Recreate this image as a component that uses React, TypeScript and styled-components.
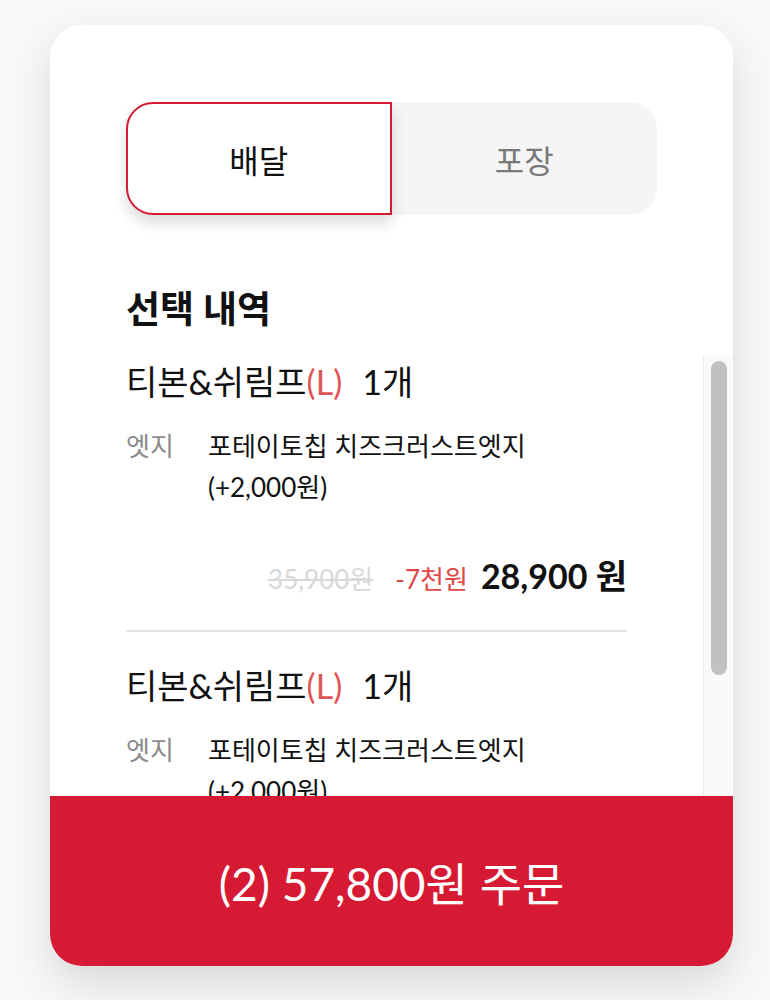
import React from 'react';
import styled, { createGlobalStyle } from 'styled-components';

const GlobalStyle = createGlobalStyle`
    body {
        margin: 0;
        background: #f8f8f8;
        font-family: Lato, "Noto Sans CJK KR", sans-serif;
        color: #111;
    }
`;

const Page = styled.div`
    display: flex;
    justify-content: flex-start;
    padding: 25px 0 0 50px;
    height: 1000px;
    box-sizing: border-box;
`;

const Card = styled.div`
    width: 683px;
    height: 941px;
    background: #fff;
    border-radius: 32px;
    overflow: hidden;
    box-shadow: 0 18px 40px rgba(0, 0, 0, 0.12);
    display: flex;
    flex-direction: column;
`;

const Top = styled.div`
    padding: 77px 76px 0;
`;

const Tabs = styled.div`
    display: grid;
    grid-template-columns: 1fr 1fr;
    height: 113px;
    background: #f5f5f5;
    border-radius: 27px;
`;

const Tab = styled.button<{ active?: boolean }>`
    border: ${({ active }) => (active ? '2px solid #d71a33' : 'none')};
    border-radius: ${({ active }) => (active ? '27px 0 0 27px' : '0 27px 27px 0')};
    background: ${({ active }) => (active ? '#fff' : 'transparent')};
    box-shadow: ${({ active }) => (active ? '0 8px 14px rgba(0, 0, 0, 0.14)' : 'none')};
    color: ${({ active }) => (active ? '#111' : '#7a7a7a')};
    font-family: inherit;
    font-size: 32px;
    padding: 0;
    cursor: pointer;
`;

const Heading = styled.h2`
    margin: 72px 0 24px;
    font-size: 37px;
    line-height: 44px;
    font-weight: 700;
`;

const List = styled.div`
    display: flex;
    height: 441px;
    flex-shrink: 0;
`;

const ListContent = styled.div`
    flex: 1;
    overflow: hidden;
`;

const ScrollTrack = styled.div`
    width: 30px;
    box-sizing: border-box;
    padding: 6px 6px 0 7px;
    background: #fafafa;
    border-left: 1px solid #ebebeb;
`;

const ScrollThumb = styled.div`
    width: 16px;
    height: 314px;
    border-radius: 8px;
    background: #c1c1c1;
`;

const Item = styled.div`
    margin: 0 76px;
    padding: 34px 0 31px;
    border-bottom: 2px solid #e4e4e4;

    &:first-child {
        padding-top: 7px;
    }
`;

const Title = styled.div`
    font-size: 34px;
    line-height: 40px;
`;

const Size = styled.span`
    color: #e05555;
    margin-right: 20px;
`;

const Option = styled.div`
    display: flex;
    margin-top: 24px;
    font-size: 26px;
    line-height: 41px;
`;

const OptionLabel = styled.div`
    width: 82px;
    flex-shrink: 0;
    color: #8a8a8a;
`;

const OptionValue = styled.div`
    width: 360px;
`;

const PriceRow = styled.div`
    display: flex;
    justify-content: flex-end;
    align-items: baseline;
    gap: 13px;
    margin-top: 48px;
    line-height: 40px;
`;

const OldPrice = styled.span`
    font-size: 26px;
    color: #d8d8d8;
    text-decoration: line-through;
    margin-right: 9px;
`;

const Discount = styled.span`
    font-size: 26px;
    color: #e04848;
`;

const Total = styled.span`
    font-size: 34px;
    font-weight: 700;
`;

const OrderButton = styled.button`
    height: 170px;
    flex-shrink: 0;
    border: none;
    background: #d71a33;
    color: #fff;
    font-family: inherit;
    font-size: 46px;
    cursor: pointer;
`;

const items = [1, 2];

const App: React.FC = () => {
    return (
        <Page>
            <GlobalStyle />
            <Card>
                <Top>
                    <Tabs>
                        <Tab active>배달</Tab>
                        <Tab>포장</Tab>
                    </Tabs>
                    <Heading>선택 내역</Heading>
                </Top>
                <List>
                    <ListContent>
                        {items.map((id) => (
                            <Item key={id}>
                                <Title>
                                    티본&쉬림프<Size>(L)</Size>1개
                                </Title>
                                <Option>
                                    <OptionLabel>엣지</OptionLabel>
                                    <OptionValue>포테이토칩 치즈크러스트엣지 (+2,000원)</OptionValue>
                                </Option>
                                <PriceRow>
                                    <OldPrice>35,900원</OldPrice>
                                    <Discount>-7천원</Discount>
                                    <Total>28,900 원</Total>
                                </PriceRow>
                            </Item>
                        ))}
                    </ListContent>
                    <ScrollTrack>
                        <ScrollThumb />
                    </ScrollTrack>
                </List>
                <OrderButton>(2) 57,800원 주문</OrderButton>
            </Card>
        </Page>
    );
};

export default App;
